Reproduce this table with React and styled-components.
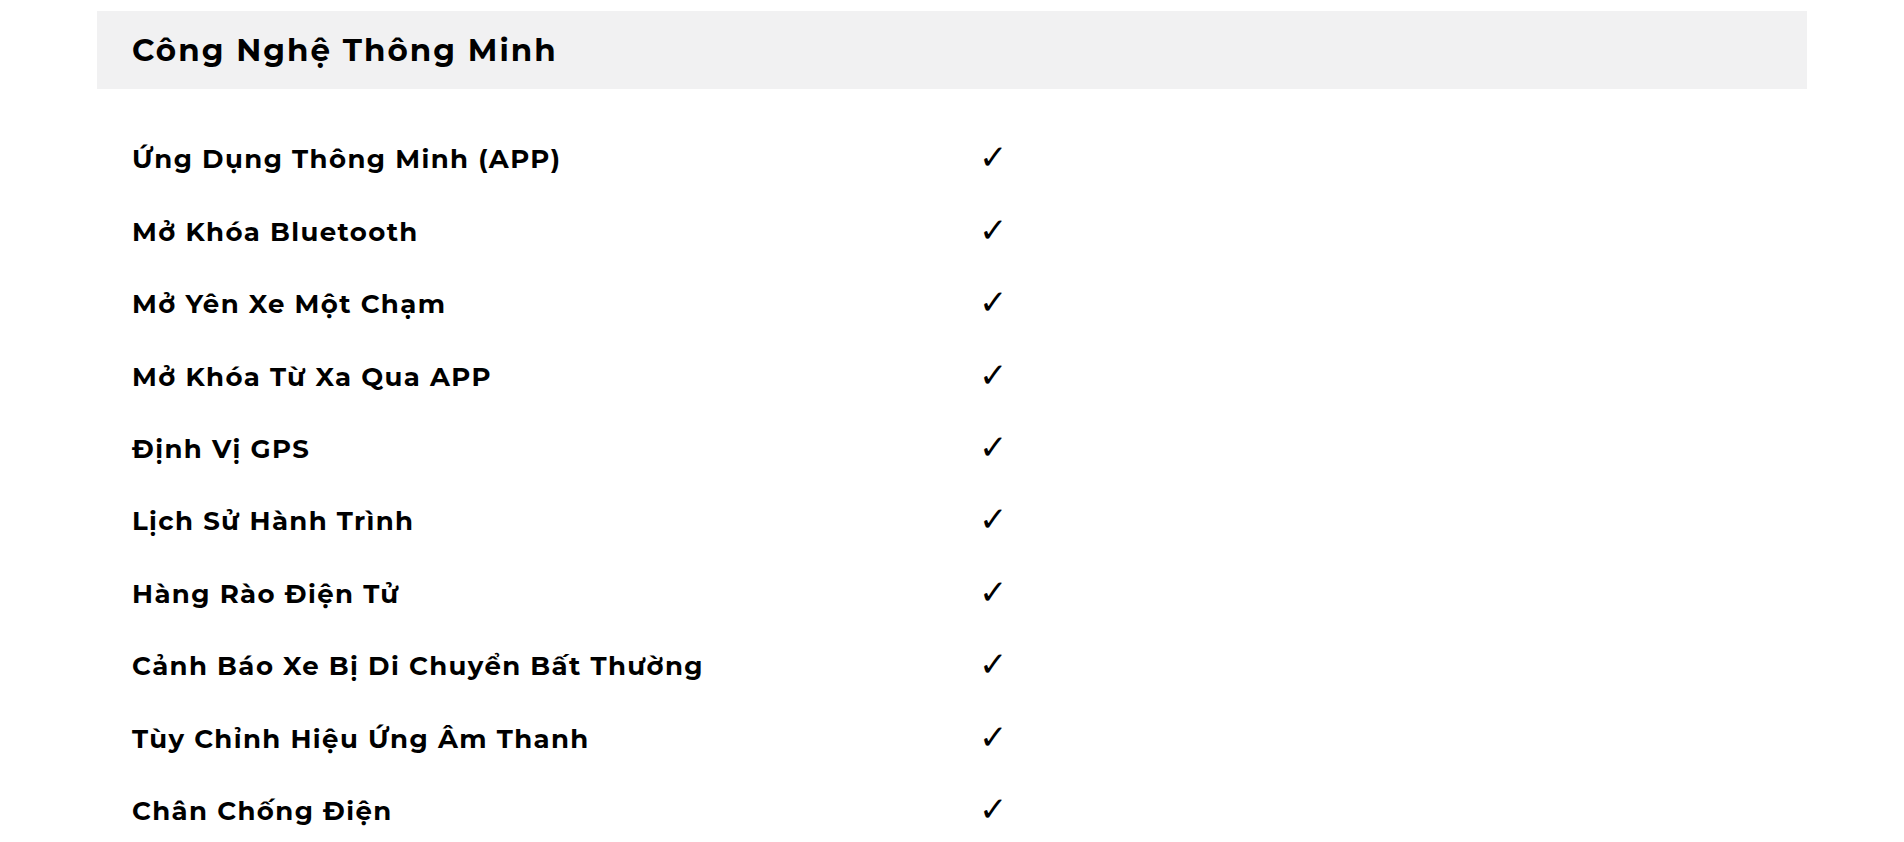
import React from 'react';
import styled, { createGlobalStyle } from 'styled-components';

const GlobalStyle = createGlobalStyle`
  body {
    margin: 0;
    background: #ffffff;
    font-family: 'Montserrat', 'Inter', 'Noto Sans', sans-serif;
    color: #000000;
  }
`;

export const SpecContainer = styled.section`
  max-width: 1710px;
  margin: 0 auto;
  padding-top: 11px;
`;
export const SpecHeader = styled.div`
  background-color: #f1f1f2;
  height: 78px;
  display: flex;
  align-items: center;
  padding: 0 35px;
`;
export const SpecTitle = styled.h2`
  margin: 0;
  font-size: 31px;
  font-weight: 700;
  letter-spacing: 2px;
`;
export const SpecList = styled.div`
  padding: 34px 35px 0;
`;
export const SpecRow = styled.div`
  display: grid;
  grid-template-columns: 847px 1fr;
  align-items: center;
  height: 72.45px;
`;
export const SpecLabel = styled.span`
  font-size: 26px;
  font-weight: 700;
  letter-spacing: 1.4px;
`;
export const SpecCheck = styled.span`
  font-family: 'DejaVu Sans', sans-serif;
  font-size: 34px;
  font-weight: 700;
  line-height: 1;
  margin-top: -4px;
`;

const SmartTech = () => {
  return (
    <>
      <GlobalStyle />
      <SpecContainer>
        <SpecHeader>
          <SpecTitle>Công Nghệ Thông Minh</SpecTitle>
        </SpecHeader>
        <SpecList>
          {features.map((item, index) => (
            <SpecRow key={index}>
              <SpecLabel>{item}</SpecLabel>
              <SpecCheck>✓</SpecCheck>
            </SpecRow>
          ))}
        </SpecList>
      </SpecContainer>
    </>
  );
};

export default SmartTech;

const features = [
  'Ứng Dụng Thông Minh (APP)',
  'Mở Khóa Bluetooth',
  'Mở Yên Xe Một Chạm',
  'Mở Khóa Từ Xa Qua APP',
  'Định Vị GPS',
  'Lịch Sử Hành Trình',
  'Hàng Rào Điện Tử',
  'Cảnh Báo Xe Bị Di Chuyển Bất Thường',
  'Tùy Chỉnh Hiệu Ứng Âm Thanh',
  'Chân Chống Điện',
];
